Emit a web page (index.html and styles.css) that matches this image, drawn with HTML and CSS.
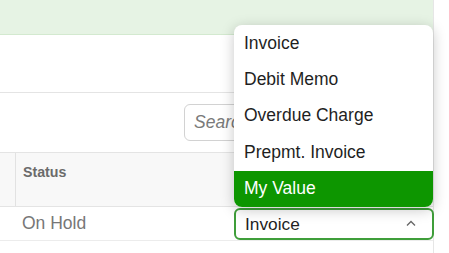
FILE: index.html
```html
<!DOCTYPE html>
<html lang="en">
<head>
    <meta charset="UTF-8">
    <meta name="viewport" content="width=device-width, initial-scale=1.0">
    <title>Documents</title>
    <link rel="stylesheet" href="styles.css">
</head>
<body>
    <div class="page">
        <!-- Notice banner -->
        <div class="banner"></div>

        <div class="spacer"></div>

        <!-- Search toolbar -->
        <div class="toolbar">
            <input class="search" type="text" placeholder="Search">
        </div>

        <!-- Table -->
        <div class="table">
            <div class="table-head">
                <div class="cell cell-first"></div>
                <div class="cell head-cell">Status</div>
                <div class="cell"></div>
            </div>
            <div class="table-row">
                <div class="cell"></div>
                <div class="cell row-cell">On Hold</div>
                <div class="cell select-cell">
                    <div class="select">
                        <span>Invoice</span>
                        <svg class="chevron" width="10" height="6" viewBox="0 0 10 6">
                            <polyline points="1,5.5 5,1.5 9,5.5" fill="none" stroke="#666" stroke-width="1.3"/>
                        </svg>
                    </div>
                </div>
            </div>
        </div>

        <!-- Open dropdown list -->
        <ul class="dropdown">
            <li>Invoice</li>
            <li>Debit Memo</li>
            <li>Overdue Charge</li>
            <li>Prepmt. Invoice</li>
            <li class="active">My Value</li>
        </ul>
    </div>
</body>
</html>
```

FILE: styles.css
```css
/* General Reset */
* {
    margin: 0;
    padding: 0;
    box-sizing: border-box;
}

body {
    font-family: 'Liberation Sans', Arial, sans-serif;
    background-color: #fff;
    color: #222;
    overflow: hidden;
}

.page {
    position: relative;
    width: 434px;
    height: 253px;
    border-right: 1px solid #e6e6e6;
}

/* Notice banner */
.banner {
    height: 35px;
    background-color: #e6f3e4;
    border-bottom: 1px solid #d3e9cf;
}

.spacer {
    height: 58px;
    border-bottom: 1px solid #e4e4e4;
}

/* Toolbar */
.toolbar {
    padding: 11px 0 11px 184px;
}

.search {
    display: block;
    width: 200px;
    height: 37px;
    padding: 0 9px;
    font-family: inherit;
    font-size: 17.5px;
    border: 1px solid #d2d2d2;
    border-radius: 6px;
    outline: none;
}

.search::placeholder {
    color: #7a7a7a;
    font-style: italic;
}

/* Table */
.table-head,
.table-row {
    display: grid;
    grid-template-columns: 16px 218px 200px;
}

.table-head {
    height: 55px;
    background-color: #f8f8f8;
    border-top: 1px solid #e4e4e4;
    border-bottom: 1px solid #e4e4e4;
}

.cell-first {
    border-right: 1px solid #e2e2e2;
}

.head-cell {
    padding: 11px 0 0 7px;
    font-size: 14.2px;
    font-weight: bold;
    color: #6b6b6b;
}

.table-row {
    height: 34px;
    border-bottom: 1px solid #ececec;
}

.row-cell {
    padding: 6px 0 0 6px;
    font-size: 17.5px;
    color: #777;
}

.select-cell {
    padding-top: 1px;
}

.select {
    display: flex;
    align-items: center;
    justify-content: space-between;
    height: 32px;
    padding: 0 16px 0 9px;
    border: 2px solid #3f9e3a;
    border-radius: 6px;
    font-size: 17.3px;
    color: #1f1f1f;
    background-color: #fff;
}

.chevron {
    margin-top: -2px;
}

/* Dropdown list */
.dropdown {
    position: absolute;
    left: 234px;
    top: 25px;
    width: 199px;
    list-style: none;
    background-color: #fff;
    border-radius: 8px;
    box-shadow: 0 3px 14px rgba(0, 0, 0, 0.22);
    overflow: hidden;
    padding-top: 1px;
}

.dropdown li {
    height: 36.2px;
    line-height: 35px;
    padding-left: 10px;
    font-size: 17.5px;
    color: #1f1f1f;
}

.dropdown li.active {
    background-color: #0d9600;
    color: #fff;
}
```
